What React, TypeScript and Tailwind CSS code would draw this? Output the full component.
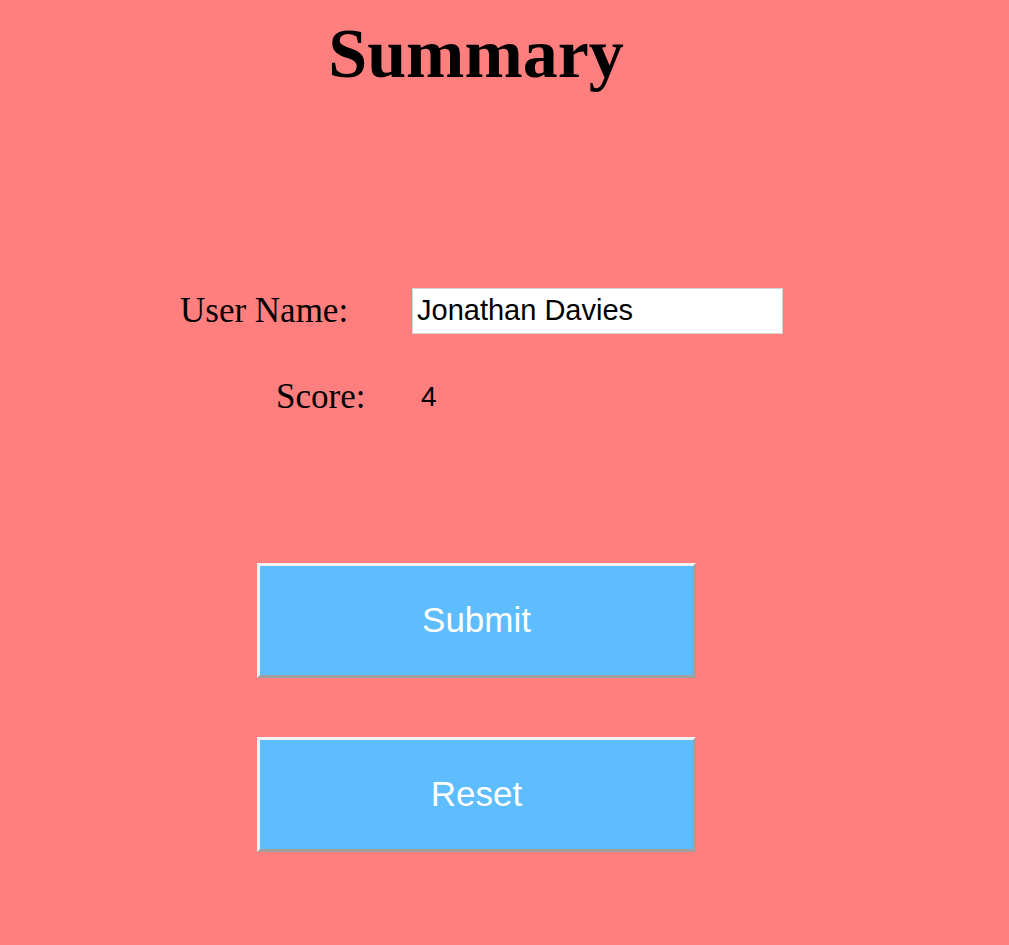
import React, { useState } from 'react';

export default function App() {
  const [name, setName] = useState('Jonathan Davies');

  return (
    <div className="min-h-screen w-full bg-[#ff7f7f] text-black">
      <div className="w-[952px] flex flex-col">
        {/* Title */}
        <h1 className="pt-[19px] text-center text-[70px] leading-none font-bold font-['Liberation_Serif',serif]">
          Summary
        </h1>

        {/* Details */}
        <div className="mt-[199px] flex flex-col font-['Liberation_Serif',serif] text-[35px]">
          <div className="flex items-center ml-[180px] h-[45px]">
            <label className="w-[232px] leading-none">User Name:</label>
            <input
              value={name}
              onChange={(e) => setName(e.target.value)}
              className="w-[371px] h-[46px] bg-white border border-[#d4d4d4] px-[4px] text-[29px] font-['Liberation_Sans',sans-serif] outline-none"
            />
          </div>
          <div className="flex items-center ml-[276px] mt-[41px] h-[45px]">
            <span className="w-[145px] leading-none">Score:</span>
            <span className="text-[28px] font-['Liberation_Sans',sans-serif]">4</span>
          </div>
        </div>

        {/* Buttons */}
        <div className="mt-[144px] ml-[257px] flex flex-col gap-[59px]">
          <button className="w-[439px] h-[115px] bg-[#5dbdfe] border-[3px] border-t-[#f2f2f2] border-l-[#f2f2f2] border-b-[#a0a0a0] border-r-[#a0a0a0] text-white text-[35px] font-['Liberation_Sans',sans-serif]">
            Submit
          </button>
          <button className="w-[439px] h-[115px] bg-[#5dbdfe] border-[3px] border-t-[#f2f2f2] border-l-[#f2f2f2] border-b-[#a0a0a0] border-r-[#a0a0a0] text-white text-[35px] font-['Liberation_Sans',sans-serif]">
            Reset
          </button>
        </div>
      </div>
    </div>
  );
}
